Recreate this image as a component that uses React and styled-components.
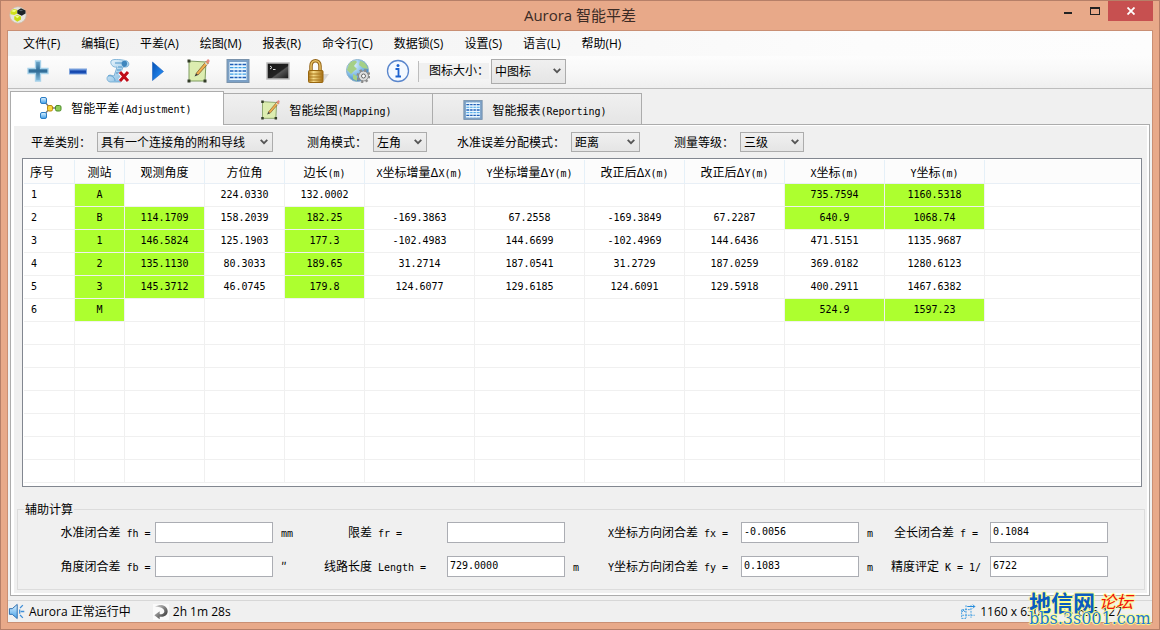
import React from "react";
import styled, { createGlobalStyle, css } from "styled-components";

const COLOR = {
    frame: "#e8a989",
    frameEdge: "#b67f68",
    face: "#f0f0f0",
    line: "#acacac",
    grid: "#f0f0f0",
    known: "#adff2f",
    close: "#c75050",
};

const SONG = `"Noto Sans CJK SC", sans-serif`;
const MONO = `"DejaVu Sans Mono", "Noto Sans CJK SC", monospace`;
const UI = `"Open Sans", "Noto Sans CJK SC", sans-serif`;

const GlobalStyle = createGlobalStyle`
    * {
        box-sizing: border-box;
    }
    body {
        margin: 0;
        font: 12px/16px ${SONG};
        color: #000;
    }
    button, input, select {
        font: inherit;
        color: inherit;
        margin: 0;
    }
    svg {
        display: block;
        flex: none;
    }
`;

const Window = styled.div`
    display: flex;
    flex-direction: column;
    height: 100vh;
    min-height: 520px;
    padding: 0 6px 6px;
    background: ${COLOR.frame};
    border: 1px solid ${COLOR.frameEdge};
    position: relative;
`;

const TitleBar = styled.header`
    display: grid;
    grid-template-columns: 1fr auto 1fr;
    height: 29px;
    flex: none;
`;

const AppIcon = styled.div`
    padding: 5px 2px;
`;

const Title = styled.h1`
    margin: 0;
    font: 15px/29px ${UI};
    color: #3b2b25;
`;

const Controls = styled.div`
    display: flex;
    justify-content: flex-end;
`;

const ControlButton = styled.button`
    display: flex;
    align-items: center;
    justify-content: center;
    width: ${(p) => (p.$close ? 45 : 27)}px;
    height: 20px;
    padding: 0;
    border: 0;
    background: ${(p) => (p.$close ? COLOR.close : "transparent")};
`;

const Client = styled.div`
    display: flex;
    flex-direction: column;
    flex: 1;
    min-height: 0;
    background: ${COLOR.face};
    border: 1px solid #c98f74;
`;

const MenuBar = styled.nav`
    display: flex;
    gap: 1px;
    flex: none;
    height: 25px;
    padding-left: 5px;
    background: linear-gradient(90deg, #f0f0f0, #fcfcfc 75%, #fdfdfd);
`;

const MenuItem = styled.button`
    padding: 0 10px;
    border: 0;
    background: none;
    font: 12px/24px ${UI};
    white-space: nowrap;
`;

const ToolBar = styled.div`
    display: flex;
    align-items: center;
    flex: none;
    height: 33px;
    padding: 0 0 2px 10px;
    background: linear-gradient(#fdfdfd, #f8f8f8 50%, #efefef);
    border-bottom: 1px solid #bdbdbd;
`;

const ToolButton = styled.button`
    display: flex;
    justify-content: center;
    width: 40px;
    padding: 0;
    border: 0;
    background: none;
`;

const ToolSeparator = styled.span`
    width: 1px;
    height: 21px;
    background: #bdbdbd;
`;

const SizeLabel = styled.label`
    margin-right: 2px;
    padding-left: 10px;
    background: ${COLOR.face};
    font: 12px/16px ${UI};
`;

const Select = styled.select`
    appearance: none;
    width: ${(p) => p.$width}px;
    height: ${(p) => (p.$tall ? 25 : 20)}px;
    padding: 0 16px 0 3px;
    border: 1px solid ${COLOR.line};
    border-radius: 0;
    background:
        url("data:image/svg+xml,%3Csvg xmlns='http://www.w3.org/2000/svg' width='8' height='6'%3E%3Cpath d='M.7.8L4 4.2L7.3.8' fill='none' stroke='%23555' stroke-width='1.8'/%3E%3C/svg%3E") no-repeat right 4px center,
        linear-gradient(#f0f0f0, #e5e5e5);
    line-height: 16px;
`;

const TabList = styled.div`
    display: flex;
    align-items: flex-end;
    flex: none;
    padding: 2px 2px 0;
`;

const Tab = styled.button`
    display: flex;
    align-items: center;
    justify-content: center;
    gap: 9px;
    width: 209px;
    height: 31px;
    padding: 2px 4px 0 0;
    border: 1px solid ${COLOR.line};
    border-bottom: 0;
    background: linear-gradient(#f0f0f0, #e5e5e5);

    & + & {
        margin-left: -1px;
        width: 210px;
    }

    ${(p) =>
        p.$active &&
        css`
            width: 214px;
            height: 34px;
            padding: 0 4px 2px 0;
            margin-bottom: -1px;
            background: #fff;
            position: relative;
        `}
`;

const TabPage = styled.main`
    display: flex;
    flex-direction: column;
    flex: 1;
    min-height: 0;
    margin: 0 2px 4px;
    padding: 1px 2px 2px 3px;
    background: #fff;
    border: 1px solid ${COLOR.line};
`;

const PageBody = styled.div`
    display: flex;
    flex-direction: column;
    flex: 1;
    min-height: 0;
    padding: 0 2px 3px 3px;
    background: ${COLOR.face};
`;

const Filters = styled.div`
    display: flex;
    align-items: center;
    gap: 30px;
    flex: none;
    height: 32px;
    padding-left: 10px;
`;

const Field = styled.div`
    display: flex;
    align-items: center;
    gap: 6px;
`;

const FieldLabel = styled.label`
    min-width: 64px;
    text-align: right;
    white-space: nowrap;
`;

const TableBox = styled.div`
    flex: 1;
    min-height: 0;
    margin: 0 3px 0 5px;
    padding: 1px;
    overflow: hidden;
    background: #fff;
    border: 1px solid #828790;
`;

const Table = styled.table`
    width: 100%;
    table-layout: fixed;
    border-collapse: separate;
    border-spacing: 0;
`;

const HeadCell = styled.th`
    height: 24px;
    padding: 0;
    font-weight: normal;
    text-align: ${(p) => (p.$first ? "left" : "center")};
    padding-left: ${(p) => (p.$first ? 6 : 0)}px;
    white-space: nowrap;
    background: #fcfcfc;
    border-right: 1px solid #e5f0f8;
    border-bottom: 1px solid #e8eff6;

    &:last-child {
        border-right: 0;
    }
`;

const Cell = styled.td`
    height: 23px;
    padding: 0;
    font: 10px/16px ${MONO};
    text-align: ${(p) => (p.$first ? "left" : "center")};
    padding-left: ${(p) => (p.$first ? 7 : 0)}px;
    border-right: 1px solid ${COLOR.grid};
    border-bottom: 1px solid ${COLOR.grid};
    background: ${(p) => (p.$known ? COLOR.known : "#fff")};
    background-clip: padding-box;

    &:last-child {
        border-right: 0;
    }
`;

const Group = styled.fieldset`
    display: grid;
    grid-template-columns:
        minmax(0, 99fr) minmax(0, 118fr) minmax(0, 30fr)
        minmax(0, 144fr) minmax(0, 118fr) minmax(0, 30fr)
        minmax(0, 146fr) minmax(0, 118fr) minmax(0, 23fr)
        minmax(0, 108fr) minmax(0, 118fr);
    row-gap: 13px;
    flex: none;
    margin: 14px 0 0;
    padding: 5px 36px 12px 38px;
    border: 1px solid #dcdcdc;
`;

const Legend = styled.legend`
    margin-left: -32px;
    padding: 0 1px;
`;

const CalcLabel = styled.label`
    text-align: center;
    white-space: nowrap;
    line-height: 20px;
`;

const CalcInput = styled.input`
    grid-column: ${(p) => p.$column};
    width: 100%;
    height: 21px;
    padding: 0 2px 3px;
    border: 1px solid #abadb3;
    border-radius: 0;
    background: #fff;
    font: 10px/16px ${MONO};
`;

const Unit = styled.span`
    padding-left: 8px;
    line-height: 20px;
`;

const Ascii = styled.span`
    font: 10px/10px ${MONO};
    white-space: pre;
`;

const StatusBar = styled.footer`
    display: flex;
    align-items: center;
    flex: none;
    height: 22px;
    padding-right: 30px;
    border-top: 1px solid #d7d7d7;
    font: 12px/20px ${UI};
`;

const StatusItem = styled.span`
    display: flex;
    align-items: center;
    gap: 4px;
    margin-right: 22px;
    white-space: nowrap;

    &:nth-child(3) {
        margin-left: auto;
    }
    &:nth-child(4) {
        gap: 0;
        margin-right: 0;
    }
`;

const Watermark = styled.div`
    position: absolute;
    right: 6px;
    bottom: 2px;
    width: 124px;
    pointer-events: none;
    text-shadow: 0 0 1px #ff8, 1px 0 1px #ff8, -1px 0 1px #ff8, 0 1px 1px #ff8, 0 -1px 1px #ff8;
    white-space: nowrap;
`;

const SiteName = styled.div`
    display: flex;
    align-items: center;
    font: bold 22px/18px ${SONG};
    color: #0a5cc0;
`;

const SiteKind = styled.em`
    margin-left: 4px;
    font-size: 17px;
    font-weight: normal;
    color: #f01010;
`;

const SiteUrl = styled.div`
    font: 16px/17px "DejaVu Serif", serif;
    color: #1c78d8;
`;

// Latin runs are set at half the width of a Chinese character
const Mixed = ({ children }) =>
    children
        .split(/([\x20-\x7e]+)/)
        .filter(Boolean)
        .map((part, i) => (/^[\x20-\x7e]/.test(part) ? <Ascii key={i}>{part}</Ascii> : part));

const Svg = ({ size = 24, children }) => (
    <svg width={size} height={size} viewBox="0 0 24 24" aria-hidden="true">
        {children}
    </svg>
);

const GradientDefs = styled.svg`
    position: absolute;
`;

const Gradients = () => (
    <GradientDefs width="0" height="0" aria-hidden="true">
        <defs>
            <linearGradient id="plus" x1="0" y1="0" x2="0" y2="1">
                <stop offset="0" stopColor="#6fa9cc" />
                <stop offset=".5" stopColor="#2f6b96" />
                <stop offset="1" stopColor="#86bfe0" />
            </linearGradient>
            <linearGradient id="minus" x1="0" y1="0" x2="0" y2="1">
                <stop offset="0" stopColor="#6f9be4" />
                <stop offset=".5" stopColor="#1648ac" />
                <stop offset="1" stopColor="#1c55c0" />
            </linearGradient>
            <linearGradient id="play" x1="0" y1="0" x2="1" y2="1">
                <stop offset="0" stopColor="#0650b4" />
                <stop offset="1" stopColor="#2c98ff" />
            </linearGradient>
            <linearGradient id="paper" x1="0" y1="0" x2="1" y2="1">
                <stop offset="0" stopColor="#f4fbff" />
                <stop offset="1" stopColor="#6fb0dc" />
            </linearGradient>
            <linearGradient id="screen" x1="0" y1="0" x2="1" y2="1">
                <stop offset="0" stopColor="#151515" />
                <stop offset=".55" stopColor="#222" />
                <stop offset=".6" stopColor="#555" />
                <stop offset="1" stopColor="#111" />
            </linearGradient>
            <linearGradient id="gold" x1="0" y1="0" x2="1" y2="0">
                <stop offset="0" stopColor="#b07a1e" />
                <stop offset=".35" stopColor="#f7dc86" />
                <stop offset="1" stopColor="#a36c12" />
            </linearGradient>
            <radialGradient id="globe" cx=".3" cy=".25" r=".8">
                <stop offset="0" stopColor="#e6f6ff" />
                <stop offset=".6" stopColor="#7cb8e6" />
                <stop offset="1" stopColor="#3c7cb8" />
            </radialGradient>
            <linearGradient id="node" x1="0" y1="0" x2="0" y2="1">
                <stop offset="0" stopColor="#e2f4ff" />
                <stop offset="1" stopColor="#3f9ee8" />
            </linearGradient>
            <linearGradient id="swirl" x1="0" y1="0" x2="1" y2="1">
                <stop offset="0" stopColor="#ddd" />
                <stop offset="1" stopColor="#222" />
            </linearGradient>
        </defs>
    </GradientDefs>
);

const LogoIcon = () => (
    <Svg size={18}>
        <circle cx="12" cy="12" r="11" fill="#e6e4de" stroke="#cbb9a8" />
        <path d="M2 7l4-3 5 1v5l-4 2-5-1z" fill="#cfe01c" />
        <path d="M7 14l4-2 5 2v4l-5 3-4-3z" fill="#c6dc10" />
        <path d="M11 6l5-3 6 3v4l-5 3-6-3z" fill="#1c2428" />
        <path d="M3 7l3-2 4 1-3 2zM8 14l3-1 3 1-3 2z" fill="#f4ff8c" />
        <path d="M13 6l3-1 3 1-3 1z" fill="#5c6870" />
    </Svg>
);

const PlusIcon = () => (
    <Svg>
        <path d="M9.500 2h5v7.500h7.500v5h-7.500v7.500h-5v-7.500H2v-5h7.500z" fill="url(#plus)" stroke="#a7d2ea" strokeWidth="1.300" />
    </Svg>
);

const MinusIcon = () => (
    <Svg>
        <rect x="3.500" y="10" width="17" height="5" fill="url(#minus)" stroke="#7ea3dc" />
    </Svg>
);

const ScriptDeleteIcon = () => (
    <Svg>
        <path d="M5 2c2-3 13-1 16 0c3 2 2 6-1 6h-3l-3 8 1 7H4c-4-1-4-6 0-7l4 1 3-9C7 9 4 5 5 2z" fill="url(#paper)" stroke="#6aa6d0" strokeWidth=".8" />
        <path d="M17 2c-2 1-2 5 1 6c3 0 4-4 2-6z" fill="#3f86bd" />
        <path d="M9 4h7M12 8h4M11 11h4M10 14h4" stroke="#4d94c8" />
        <path d="M2 17c3-1 7 1 7 5" fill="none" stroke="#5b9fd0" />
        <path d="M14 13l8 9M22 13l-8 9" stroke="#fff" strokeWidth="5" />
        <path d="M14 13l8 9M22 13l-8 9" stroke="#c00d18" strokeWidth="3" />
    </Svg>
);

const PlayIcon = () => (
    <Svg>
        <path d="M6.500 3l11 9.500-11 9z" fill="url(#play)" stroke="#1a62c0" strokeWidth=".6" />
    </Svg>
);

const SketchIcon = ({ size }) => (
    <Svg size={size}>
        <path d="M3 2l17 1-1 19H3z" fill="#dcedb0" stroke="#7f9c60" />
        <path d="M1.500.5h3v3h-3zM1.500 20.500h3v3h-3zM17.500 20.500h3v3h-3z" fill="#333d28" />
        <path d="M10 14.500L20.500 2l2 2L12 16z" fill="#f0b04c" stroke="#76502c" strokeWidth=".7" />
        <path d="M20 2.500l1.500-2c1-.8 2.500.5 2 2L22.500 4.500z" fill="#e48a80" />
        <path d="M8.500 17.500l1.500-3 2 1.500z" fill="#333" />
        <path d="M19 3.500l2.500 2.500" stroke="#d8dde0" strokeWidth="1.200" />
    </Svg>
);

const SheetIcon = ({ size }) => (
    <Svg size={size}>
        <rect x="1" y=".5" width="22" height="23" fill="#7ba0c6" stroke="#7a93ac" />
        <rect x="3.500" y="3" width="17" height="18" fill="#e9f7ff" />
        <path d="M4 5.500h16M4 12h16M4 18.500h16" stroke="#1f5fb8" strokeWidth="1.600" />
        <path d="M4 8.700h16M4 15.200h16" stroke="#3fa0e6" strokeWidth="1.200" />
        <path d="M8 3v18M12 3v18M16 3v18" stroke="#e9f7ff" />
    </Svg>
);

const ConsoleIcon = () => (
    <Svg>
        <rect x="1" y="4" width="22" height="16" fill="url(#screen)" stroke="#bcbcbc" strokeWidth="1.500" />
        <path d="M4 7l2 1.500L4 10M7 10.500h2.500" fill="none" stroke="#ddd" />
    </Svg>
);

const LockIcon = () => (
    <Svg>
        <path d="M16 15h7l-5 7z" fill="#ccc" opacity=".7" />
        <path d="M5 12V7c0-7 9-7 9 0v5" fill="none" stroke="#946314" strokeWidth="3.500" />
        <path d="M5 12V7c0-7 9-7 9 0v5" fill="none" stroke="#e8c266" strokeWidth="1.500" />
        <rect x="2.500" y="11.500" width="14.500" height="12" rx="1" fill="url(#gold)" stroke="#98660f" />
        <path d="M3 15h13.500M3 18h13.500M3 21h13.500" stroke="#a9761d" />
    </Svg>
);

const GlobeIcon = () => (
    <Svg>
        <circle cx="11.500" cy="11.500" r="11" fill="url(#globe)" stroke="#8eb4cc" />
        <path d="M3 5c3-4 7-4 8-2L8 7l3 3-3 2-3 3-4-4zM14 2c4 0 7 4 8 8l-5-1-4-3zM7 15l4 2v5l-4-2z" fill="#a5d086" />
        <circle cx="17.500" cy="17" r="5" fill="#ddd" stroke="#777" strokeWidth=".8" />
        <circle cx="17.500" cy="17" r="5.800" fill="none" stroke="#8c8c8c" strokeWidth="2.400" strokeDasharray="2.200 2.350" />
        <circle cx="17.500" cy="17" r="2" fill="#fff" stroke="#666" />
    </Svg>
);

const InfoIcon = () => (
    <Svg>
        <circle cx="12" cy="12" r="10.500" fill="#f4f9ff" stroke="#5a86cc" strokeWidth="1.300" />
        <circle cx="12" cy="6.500" r="1.500" fill="#1d62cf" />
        <path d="M9.500 10h3v7.500M9.500 17.500h5.500" fill="none" stroke="#1d62cf" strokeWidth="1.800" />
    </Svg>
);

const NetworkIcon = () => (
    <Svg>
        <path d="M6 5l6 7-6 7M12 12h8" fill="none" stroke="#777" strokeWidth="1.300" />
        <rect x="2.500" y="1.500" width="6" height="6" rx="1.500" fill="url(#node)" stroke="#2b7cc4" />
        <rect x="2.500" y="16.500" width="6" height="6" rx="1.500" fill="url(#node)" stroke="#2b7cc4" />
        <rect x="9.500" y="9.500" width="5" height="5.500" rx="1.500" fill="#fbd43c" stroke="#b98a10" />
        <rect x="17.500" y="9.500" width="5.500" height="5.500" rx="1.500" fill="#8fce5a" stroke="#4c8c28" />
    </Svg>
);

const SpeakerIcon = () => (
    <Svg size={17}>
        <path d="M2 8h4l7-6v20l-7-6H2z" fill="url(#node)" stroke="#2d6eb0" strokeWidth="1.400" />
        <path d="M17 7l4-4M18 12h5M17 17l4 4M16.500 9v6" stroke="#3f8fd8" strokeWidth="1.800" fill="none" />
    </Svg>
);

const SwirlIcon = () => (
    <Svg size={16}>
        <rect width="24" height="24" fill="#fafafa" />
        <path d="M3 4C12-2 22 3 22 11c0 7-7 9-12 8v4l-8-6 8-6v4c4 1 7-1 7-4c0-5-7-7-14-7z" fill="url(#swirl)" />
    </Svg>
);

const SizeIcon = () => (
    <Svg size={15}>
        <path d="M2 9h14M8 2v20M16 2v20M2 18h20M1 9v14M1 23h7" stroke="#3b9be0" strokeWidth="1.500" strokeDasharray="3 1.500" fill="none" />
        <path d="M10 4h12M19 1l3 3-3 3M1 13l3-3 3 3" stroke="#248bdc" strokeWidth="1.600" fill="none" />
    </Svg>
);

const CursorIcon = () => (
    <Svg size={15}>
        <path d="M3 2v18l4-4 3 7 3-1.500-3-6.500h6z" fill="#f8f8f8" stroke="#999" strokeWidth="1.300" />
    </Svg>
);

const MENUS = ["文件(F)", "编辑(E)", "平差(A)", "绘图(M)", "报表(R)", "命令行(C)", "数据锁(S)", "设置(S)", "语言(L)", "帮助(H)"];

const TOOLS = [
    ["添加", PlusIcon],
    ["删除", MinusIcon],
    ["清空", ScriptDeleteIcon],
    ["运行", PlayIcon],
    ["绘图", SketchIcon],
    ["报表", SheetIcon],
    ["命令行", ConsoleIcon],
    ["数据锁", LockIcon],
    ["设置", GlobeIcon],
    ["关于", InfoIcon],
];

const FILTERS = [
    { id: "kind", label: "平差类别：", value: "具有一个连接角的附和导线", width: 176 },
    { id: "angle", label: "测角模式：", value: "左角", width: 54 },
    { id: "level", label: "水准误差分配模式：", value: "距离", width: 69 },
    { id: "grade", label: "测量等级：", value: "三级", width: 64 },
];

const COLUMNS = [
    ["序号", 51],
    ["测站", 50],
    ["观测角度", 80],
    ["方位角", 80],
    ["边长(m)", 80],
    ["X坐标增量ΔX(m)", 110],
    ["Y坐标增量ΔY(m)", 110],
    ["改正后ΔX(m)", 100],
    ["改正后ΔY(m)", 100],
    ["X坐标(m)", 100],
    ["Y坐标(m)", 100],
    ["", undefined],
];

// a leading * marks a known value, drawn on green
const ROWS = [
    ["1", "*A", "", "224.0330", "132.0002", "", "", "", "", "*735.7594", "*1160.5318"],
    ["2", "*B", "*114.1709", "158.2039", "*182.25", "-169.3863", "67.2558", "-169.3849", "67.2287", "*640.9", "*1068.74"],
    ["3", "*1", "*146.5824", "125.1903", "*177.3", "-102.4983", "144.6699", "-102.4969", "144.6436", "471.5151", "1135.9687"],
    ["4", "*2", "*135.1130", "80.3033", "*189.65", "31.2714", "187.0541", "31.2729", "187.0259", "369.0182", "1280.6123"],
    ["5", "*3", "*145.3712", "46.0745", "*179.8", "124.6077", "129.6185", "124.6091", "129.5918", "400.2911", "1467.6382"],
    ["6", "*M", "", "", "", "", "", "", "", "*524.9", "*1597.23"],
    ...Array.from({ length: 7 }, () => []),
];

const CALC = [
    { id: "fh", label: "水准闭合差 fh =", value: "", unit: "mm", column: 2 },
    { id: "fr", label: "限差 fr =", value: "", unit: "", column: 5 },
    { id: "fx", label: "X坐标方向闭合差 fx =", value: "-0.0056", unit: "m", column: 8 },
    { id: "f", label: "全长闭合差 f =", value: "0.1084", column: 11 },
    { id: "fb", label: "角度闭合差 fb =", value: "", unit: "″", column: 2 },
    { id: "len", label: "线路长度 Length =", value: "729.0000", unit: "m", column: 5 },
    { id: "fy", label: "Y坐标方向闭合差 fy =", value: "0.1083", unit: "m", column: 8 },
    { id: "k", label: "精度评定 K = 1/", value: "6722", column: 11 },
];

const DataTable = () => (
    <TableBox>
        <Table>
            <colgroup>
                {COLUMNS.map(([name, width]) => (
                    <col key={name} width={width} />
                ))}
            </colgroup>
            <thead>
                <tr>
                    {COLUMNS.map(([name], i) => (
                        <HeadCell key={name} $first={i === 0}>
                            <Mixed>{name}</Mixed>
                        </HeadCell>
                    ))}
                </tr>
            </thead>
            <tbody>
                {ROWS.map((row, r) => (
                    <tr key={r}>
                        {COLUMNS.map(([name], i) => {
                            const text = row[i] || "";
                            return (
                                <Cell key={name} $first={i === 0} $known={text.startsWith("*")}>
                                    {text.replace("*", "")}
                                </Cell>
                            );
                        })}
                    </tr>
                ))}
            </tbody>
        </Table>
    </TableBox>
);

const App = () => {
    return (
        <Window>
            <GlobalStyle />
            <Gradients />
            <TitleBar>
                <AppIcon>
                    <LogoIcon />
                </AppIcon>
                <Title>Aurora 智能平差</Title>
                <Controls>
                    <ControlButton aria-label="最小化">
                        <svg width="8" height="6">
                            <path d="M0 5h8" stroke="#222" strokeWidth="2" />
                        </svg>
                    </ControlButton>
                    <ControlButton aria-label="最大化">
                        <svg width="10" height="8">
                            <path d="M0 0h10v8H0zM1 2v5h8V2z" fill="#222" fillRule="evenodd" />
                        </svg>
                    </ControlButton>
                    <ControlButton $close aria-label="关闭">
                        <svg width="8" height="8">
                            <path d="M.5.5l7 7M7.500.5l-7 7" stroke="#fff" strokeWidth="1.800" />
                        </svg>
                    </ControlButton>
                </Controls>
            </TitleBar>
            <Client>
                <MenuBar>
                    {MENUS.map((name) => (
                        <MenuItem key={name}>{name}</MenuItem>
                    ))}
                </MenuBar>
                <ToolBar>
                    {TOOLS.map(([name, Icon]) => (
                        <ToolButton key={name} aria-label={name}>
                            <Icon />
                        </ToolButton>
                    ))}
                    <ToolSeparator />
                    <SizeLabel htmlFor="icon-size">图标大小：</SizeLabel>
                    <Select id="icon-size" $width={75} $tall>
                        <option>中图标</option>
                    </Select>
                </ToolBar>
                <TabList role="tablist">
                    <Tab role="tab" aria-selected="true" $active>
                        <NetworkIcon />
                        <span><Mixed>智能平差(Adjustment)</Mixed></span>
                    </Tab>
                    <Tab role="tab">
                        <SketchIcon size={20} />
                        <span><Mixed>智能绘图(Mapping)</Mixed></span>
                    </Tab>
                    <Tab role="tab">
                        <SheetIcon size={20} />
                        <span><Mixed>智能报表(Reporting)</Mixed></span>
                    </Tab>
                </TabList>
                <TabPage>
                    <PageBody>
                        <Filters>
                            {FILTERS.map((f) => (
                                <Field key={f.id}>
                                    <FieldLabel htmlFor={f.id}>{f.label}</FieldLabel>
                                    <Select id={f.id} $width={f.width}>
                                        <option>{f.value}</option>
                                    </Select>
                                </Field>
                            ))}
                        </Filters>
                        <DataTable />
                        <Group>
                            <Legend>辅助计算</Legend>
                            {CALC.map((c) => (
                                <React.Fragment key={c.id}>
                                    <CalcLabel htmlFor={c.id}>
                                        <Mixed>{c.label}</Mixed>
                                    </CalcLabel>
                                    <CalcInput id={c.id} defaultValue={c.value} $column={c.column} />
                                    {c.unit !== undefined && (
                                        <Unit>
                                            <Mixed>{c.unit}</Mixed>
                                        </Unit>
                                    )}
                                </React.Fragment>
                            ))}
                        </Group>
                    </PageBody>
                </TabPage>
                <StatusBar>
                    <StatusItem>
                        <SpeakerIcon />
                        Aurora 正常运行中
                    </StatusItem>
                    <StatusItem>
                        <SwirlIcon />
                        2h 1m 28s
                    </StatusItem>
                    <StatusItem>
                        <SizeIcon />
                        1160 x 630
                    </StatusItem>
                    <StatusItem>
                        <CursorIcon />
                        696,127
                    </StatusItem>
                </StatusBar>
            </Client>
            <Watermark>
                <SiteName>
                    地信网<SiteKind>论坛</SiteKind>
                </SiteName>
                <SiteUrl>bbs.3s001.com</SiteUrl>
            </Watermark>
        </Window>
    );
};

export default App;
